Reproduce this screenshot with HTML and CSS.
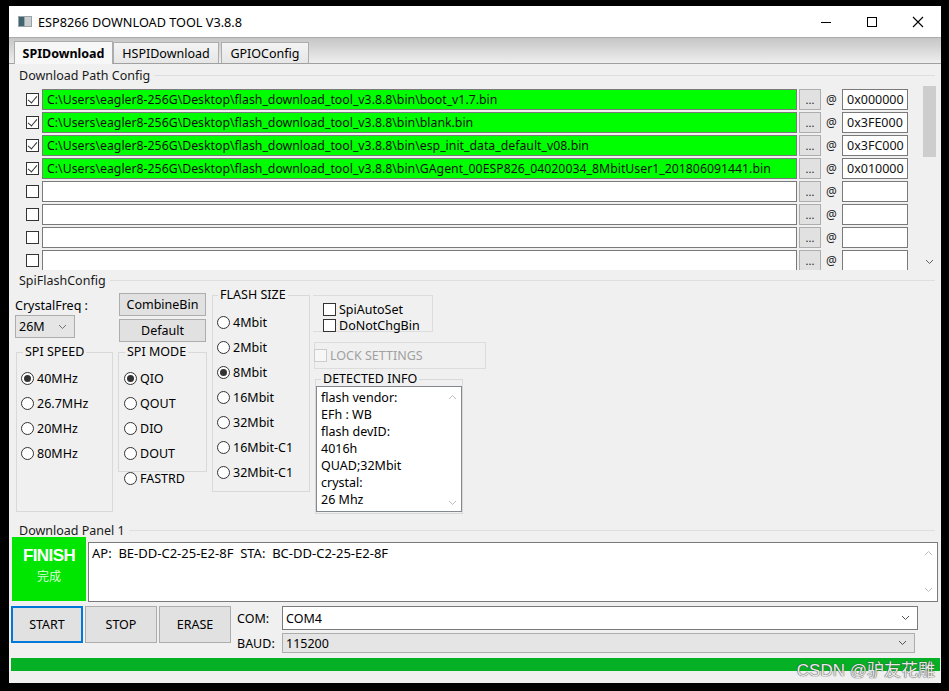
FILE: index.html
```html
<!DOCTYPE html>
<html>
<head>
<meta charset="utf-8">
<link rel="stylesheet" href="styles.css">
</head>
<body>
<div class="window">
  <div class="titlebar">
    <svg class="app-icon" viewBox="0 0 14 11" width="14" height="11"><rect x="0" y="0" width="14" height="11" fill="#9aa4a6"/><rect x="1" y="1" width="5" height="9" fill="#3f6570"/><rect x="7" y="1" width="6" height="9" fill="#c9cfd0"/></svg>
    <div class="title">ESP8266 DOWNLOAD TOOL V3.8.8</div>
    <div class="controls">
      <div class="ctl"><svg width="12" height="12" viewBox="0 0 12 12"><line x1="1" y1="6.5" x2="11" y2="6.5" stroke="#000" stroke-width="1"/></svg></div>
      <div class="ctl"><svg width="12" height="12" viewBox="0 0 12 12"><rect x="1.5" y="1.5" width="9" height="9" fill="none" stroke="#000" stroke-width="1"/></svg></div>
      <div class="ctl"><svg width="12" height="12" viewBox="0 0 12 12"><path d="M1 1 L11 11 M11 1 L1 11" stroke="#000" stroke-width="1.1"/></svg></div>
    </div>
  </div>
  <div class="tabstrip">
    <div class="tab active">SPIDownload</div>
    <div class="tab t2">HSPIDownload</div>
    <div class="tab t3">GPIOConfig</div>
  </div>

  <div class="sec-paths">
    <div class="sec-label">Download Path Config</div>
    <div class="paths-body">
      <div class="rows">
        <div class="row"><span class="cb on"></span><div class="path green">C:\Users\eagler8-256G\Desktop\flash_download_tool_v3.8.8\bin\boot_v1.7.bin</div><div class="dots">...</div><div class="at">@</div><div class="addr green">0x000000</div></div>
        <div class="row"><span class="cb on"></span><div class="path green">C:\Users\eagler8-256G\Desktop\flash_download_tool_v3.8.8\bin\blank.bin</div><div class="dots">...</div><div class="at">@</div><div class="addr green">0x3FE000</div></div>
        <div class="row"><span class="cb on"></span><div class="path green">C:\Users\eagler8-256G\Desktop\flash_download_tool_v3.8.8\bin\esp_init_data_default_v08.bin</div><div class="dots">...</div><div class="at">@</div><div class="addr green">0x3FC000</div></div>
        <div class="row"><span class="cb on"></span><div class="path green">C:\Users\eagler8-256G\Desktop\flash_download_tool_v3.8.8\bin\GAgent_00ESP826_04020034_8MbitUser1_201806091441.bin</div><div class="dots">...</div><div class="at">@</div><div class="addr green">0x010000</div></div>
        <div class="row"><span class="cb"></span><div class="path"></div><div class="dots">...</div><div class="at">@</div><div class="addr"></div></div>
        <div class="row"><span class="cb"></span><div class="path"></div><div class="dots">...</div><div class="at">@</div><div class="addr"></div></div>
        <div class="row"><span class="cb"></span><div class="path"></div><div class="dots">...</div><div class="at">@</div><div class="addr"></div></div>
        <div class="row"><span class="cb"></span><div class="path"></div><div class="dots">...</div><div class="at">@</div><div class="addr"></div></div>
      </div>
      <div class="vscroll">
        <div class="thumb"></div>
        <svg class="chev-down" width="9" height="6" viewBox="0 0 9 6"><path d="M1 1 L4.5 4.5 L8 1" fill="none" stroke="#606060" stroke-width="1"/></svg>
      </div>
    </div>
  </div>

  <div class="sec-spi">
    <div class="sec-label">SpiFlashConfig</div>
    <div class="spi-row">
      <div class="col-a">
        <div class="cf-label">CrystalFreq :</div>
        <div class="select gray small"><span>26M</span><svg width="9" height="6" viewBox="0 0 9 6"><path d="M1 1 L4.5 4.5 L8 1" fill="none" stroke="#707070" stroke-width="1"/></svg></div>
        <fieldset class="grp speed">
          <legend>SPI SPEED</legend>
          <div class="opt"><span class="radio on"></span>40MHz</div>
          <div class="opt"><span class="radio"></span>26.7MHz</div>
          <div class="opt"><span class="radio"></span>20MHz</div>
          <div class="opt"><span class="radio"></span>80MHz</div>
        </fieldset>
      </div>
      <div class="col-b">
        <div class="btn combine">CombineBin</div>
        <div class="btn deflt">Default</div>
        <fieldset class="grp mode">
          <legend>SPI MODE</legend>
          <div class="opt"><span class="radio on"></span>QIO</div>
          <div class="opt"><span class="radio"></span>QOUT</div>
          <div class="opt"><span class="radio"></span>DIO</div>
          <div class="opt"><span class="radio"></span>DOUT</div>
        </fieldset>
        <div class="opt fastrd"><span class="radio"></span>FASTRD</div>
      </div>
      <div class="col-c">
        <fieldset class="grp size">
          <legend>FLASH SIZE</legend>
          <div class="opt"><span class="radio"></span>4Mbit</div>
          <div class="opt"><span class="radio"></span>2Mbit</div>
          <div class="opt"><span class="radio on"></span>8Mbit</div>
          <div class="opt"><span class="radio"></span>16Mbit</div>
          <div class="opt"><span class="radio"></span>32Mbit</div>
          <div class="opt"><span class="radio"></span>16Mbit-C1</div>
          <div class="opt"><span class="radio"></span>32Mbit-C1</div>
        </fieldset>
      </div>
      <div class="col-d">
        <div class="chkbox">
          <div class="chk"><span class="cb"></span>SpiAutoSet</div>
          <div class="chk"><span class="cb"></span>DoNotChgBin</div>
        </div>
        <div class="lockbox"><span class="cb dis"></span>LOCK SETTINGS</div>
        <fieldset class="grp detect">
          <legend>DETECTED INFO</legend>
          <div class="infobox">
            <div class="info-text">flash vendor:<br>EFh : WB<br>flash devID:<br>4016h<br>QUAD;32Mbit<br>crystal:<br>26 Mhz</div>
            <div class="info-scroll">
              <svg width="9" height="6" viewBox="0 0 9 6"><path d="M1 5 L4.5 1.5 L8 5" fill="none" stroke="#bdbdbd" stroke-width="1"/></svg>
              <svg width="9" height="6" viewBox="0 0 9 6"><path d="M1 1 L4.5 4.5 L8 1" fill="none" stroke="#bdbdbd" stroke-width="1"/></svg>
            </div>
          </div>
        </fieldset>
      </div>
    </div>
  </div>

  <div class="sec-panel">
    <div class="sec-label">Download Panel 1</div>
    <div class="panel-row">
      <div class="finish"><div class="fin-en">FINISH</div><div class="fin-cn">完成</div></div>
      <div class="log">
        <div class="log-text">AP:  BE-DD-C2-25-E2-8F  STA:  BC-DD-C2-25-E2-8F</div>
        <div class="log-scroll">
          <svg width="9" height="6" viewBox="0 0 9 6"><path d="M1 5 L4.5 1.5 L8 5" fill="none" stroke="#bdbdbd" stroke-width="1"/></svg>
          <svg width="9" height="6" viewBox="0 0 9 6"><path d="M1 1 L4.5 4.5 L8 1" fill="none" stroke="#bdbdbd" stroke-width="1"/></svg>
        </div>
      </div>
    </div>
    <div class="ctrl-row">
      <div class="bigbtn focus">START</div>
      <div class="bigbtn">STOP</div>
      <div class="bigbtn">ERASE</div>
      <div class="ports">
        <div class="port-row"><div class="plabel">COM:</div><div class="select white com"><span>COM4</span><svg width="9" height="6" viewBox="0 0 9 6"><path d="M1 1 L4.5 4.5 L8 1" fill="none" stroke="#505050" stroke-width="1"/></svg></div></div>
        <div class="port-row baudrow"><div class="plabel">BAUD:</div><div class="select gray baud"><span>115200</span><svg width="9" height="6" viewBox="0 0 9 6"><path d="M1 1 L4.5 4.5 L8 1" fill="none" stroke="#505050" stroke-width="1"/></svg></div></div>
      </div>
    </div>
    <div class="progress"></div>
  </div>
  <div class="watermark">CSDN @驴友花雕</div>
</div>
</body>
</html>
```

FILE: styles.css
```css
* { box-sizing: border-box; }
html, body { margin: 0; padding: 0; }
body {
  background: #000;
  width: 949px;
  height: 691px;
  overflow: hidden;
  font-family: "Noto Sans", "Open Sans", "Noto Sans CJK SC", sans-serif;
  font-size: 12px;
  color: #000;
}
.window {
  width: 932px;
  height: 677px;
  margin: 6px 0 0 9px;
  background: #f0f0f0;
  display: flex;
  flex-direction: column;
  position: relative;
  overflow: hidden;
}
/* title bar */
.titlebar {
  height: 32px;
  flex: none;
  background: #fff;
  border-bottom: 1px solid #acacac;
  display: flex;
  align-items: center;
}
.app-icon { margin-left: 9px; flex: none; }
.title { margin-left: 6px; font-size: 12.7px; }
.controls { margin-left: auto; display: flex; height: 100%; }
.ctl { width: 46px; display: flex; align-items: center; justify-content: center; }

/* tabs */
.tabstrip {
  height: 26px;
  flex: none;
  display: flex;
  align-items: flex-end;
  padding-left: 5px;
  background: linear-gradient(#c6c6c6, #eeeeee);
  border-bottom: 1px solid #a0a0a0;
}
.tab {
  height: 21px;
  border: 1px solid #acacac;
  border-bottom: none;
  background: linear-gradient(#f4f4f4, #e6e6e6);
  font-size: 12.5px;
  display: flex;
  align-items: center;
  justify-content: center;
}
.tab.active {
  width: 99px;
  height: 23px;
  margin-bottom: -1px;
  background: #f7f7f7;
  font-weight: bold;
}
.t2 { width: 106px; }
.t3 { width: 88px; margin-left: 2px; }

/* section labels */
.sec-label {
  display: flex;
  align-items: center;
  padding-left: 10px;
  font-size: 12.5px;
  color: #1a1a1a;
}
.sec-label::after {
  content: "";
  flex: 1;
  height: 1px;
  background: #dedede;
  margin-left: 4px;
  margin-right: 6px;
}

/* paths */
.sec-paths { height: 206px; flex: none; display: flex; flex-direction: column; }
.sec-paths .sec-label { height: 22px; }
.paths-body { height: 184px; display: flex; }
.rows { flex: 1; overflow: hidden; padding-top: 3px; }
.row { height: 21px; margin-bottom: 2px; display: flex; align-items: center; }
.cb {
  width: 13px; height: 13px;
  border: 1px solid #333;
  background: #fff;
  flex: none;
  position: relative;
}
.cb.on::after {
  content: "";
  position: absolute;
  left: 3px; top: 0px;
  width: 4px; height: 8px;
  border-right: 1px solid #333;
  border-bottom: 1px solid #333;
  transform: rotate(40deg);
}
.cb.dis { border-color: #cccccc; background: #f7f7f7; }
.row .cb { margin-left: 17px; }
.path {
  margin-left: 3px;
  width: 755px;
  height: 21px;
  border: 1px solid #7a7a7a;
  background: #fff;
  padding-left: 4px;
  line-height: 19px;
  font-size: 12.3px;
  color: #111;
  white-space: nowrap;
  overflow: hidden;
}
.green { background: #00ff00; }
.dots {
  margin-left: 2px;
  width: 22px;
  height: 21px;
  background: #e1e1e1;
  border: 1px solid #adadad;
  text-align: center;
  font-size: 11px;
  line-height: 19px;
  color: #222;
}
.at { width: 21px; text-align: center; font-size: 12px; color: #222; }
.addr {
  width: 66px;
  height: 21px;
  border: 1px solid #7a7a7a;
  background: #fff;
  padding-left: 4px;
  line-height: 19px;
  font-size: 12.5px;
  color: #111;
}
.vscroll {
  width: 15px;
  margin-left: 14px;
  margin-right: 4px;
  background: #f0f0f0;
  display: flex;
  flex-direction: column;
  align-items: center;
}
.thumb { width: 13px; height: 71px; background: #cdcdcd; }
.chev-down { margin-top: auto; margin-bottom: 5px; }

/* spi config */
.sec-spi { height: 252px; flex: none; padding-top: 2px; }
.sec-spi .sec-label { height: 16px; }
.spi-row { display: flex; align-items: flex-start; }
.col-a { width: 104px; padding-left: 6px; flex: none; }
.col-b { width: 89px; margin-left: 5px; flex: none; }
.col-c { width: 99px; margin-left: 4px; flex: none; }
.col-d { width: 173px; margin-left: 3px; flex: none; }
.cf-label { margin-top: 9px; height: 18px; line-height: 18px; font-size: 12.5px; }
.select {
  height: 23px;
  display: flex;
  align-items: center;
  padding-left: 3px;
  padding-right: 7px;
  justify-content: space-between;
  font-size: 12.5px;
}
.select.gray { background: #e5e5e5; border: 1px solid #adadad; }
.select.white { background: #fff; border: 1px solid #7a7a7a; }
.select.small { width: 60px; }

fieldset.grp {
  margin: 0;
  padding: 0;
  border: 1px solid #d9d9d9;
  min-width: 0;
}
fieldset.grp legend {
  padding: 0 2px;
  margin-left: 6px;
  line-height: 14px;
  font-size: 12.5px;
}
fieldset.speed { margin: 7px 0 0 1px; height: 167px; padding: 7px 0 0 4px; }
fieldset.speed legend { margin-left: 2px; }
fieldset.mode { margin-top: 3px; height: 127px; padding: 7px 0 0 5px; }
fieldset.mode legend { margin-left: 1px; }
fieldset.size { margin-left: 1px; height: 204px; padding: 8px 0 0 4px; }
fieldset.size legend { margin-left: 1px; }
.opt { height: 25px; display: flex; align-items: center; font-size: 12.5px; }
.radio {
  width: 13px; height: 13px;
  border: 1px solid #333;
  border-radius: 50%;
  background: #fff;
  margin-right: 3px;
  flex: none;
  position: relative;
}
.radio.on::after {
  content: "";
  position: absolute;
  left: 2px; top: 2px;
  width: 7px; height: 7px;
  border-radius: 50%;
  background: #333;
}
.fastrd { margin-top: -6px; padding-left: 6px; }
.btn {
  height: 23px;
  width: 87px;
  margin-left: 1px;
  background: #e1e1e1;
  border: 1px solid #adadad;
  display: flex;
  align-items: center;
  justify-content: center;
  font-size: 12.5px;
}
.combine { margin-top: 5px; }
.deflt { margin-top: 3px; }

.chkbox {
  margin-top: 7px;
  width: 120px;
  height: 37px;
  border: 1px solid #dcdcdc;
  border-left: none;
  padding-top: 5px;
  padding-left: 10px;
}
.chk { height: 16px; display: flex; align-items: center; font-size: 12.5px; }
.chk .cb { margin-right: 3px; }
.lockbox {
  margin-top: 10px;
  margin-left: 1px;
  width: 172px;
  height: 27px;
  border: 1px solid #dcdcdc;
  display: flex;
  align-items: center;
  color: #a0a0a0;
  font-size: 12.5px;
}
.lockbox .cb { margin-right: 3px; margin-left: -1px; }
fieldset.detect { margin: 3px 0 0 2px; width: 148px; height: 142px; }
fieldset.detect legend { margin-left: 5px; }
.infobox {
  width: 146px;
  height: 126px;
  border: 1px solid #828790;
  background: #fff;
  display: flex;
}
.info-text { flex: 1; padding-left: 4px; padding-top: 2px; line-height: 17px; font-size: 12.5px; }
.info-scroll { width: 17px; display: flex; flex-direction: column; justify-content: space-between; align-items: center; padding: 7px 0 5px; }

/* panel */
.sec-panel { flex: 1; padding-top: 1px; display: flex; flex-direction: column; }
.sec-panel .sec-label { height: 14px; }
.panel-row { display: flex; align-items: flex-start; height: 65px; }
.finish {
  margin-left: 3px;
  width: 74px;
  height: 64px;
  background: #00e600;
  color: #fff;
  display: flex;
  flex-direction: column;
  align-items: center;
}
.fin-en { margin-top: 8px; font-size: 17px; letter-spacing: -0.6px; font-weight: bold; line-height: 22px; font-family: "Liberation Sans", sans-serif; }
.fin-cn { margin-top: 1px; font-size: 12px; line-height: 16px; color: #dfffdf; font-family: "Noto Sans CJK SC", sans-serif; }
.log {
  margin-left: 2px;
  margin-top: 5px;
  width: 850px;
  height: 60px;
  border: 1px solid #7a7a7a;
  background: #fff;
  display: flex;
}
.log-text { flex: 1; padding-left: 3px; padding-top: 1px; white-space: pre; font-size: 13px; line-height: 18px; }
.log-scroll { width: 17px; display: flex; flex-direction: column; justify-content: space-between; align-items: center; padding: 7px 0 8px; }
.ctrl-row { display: flex; margin-top: 4px; height: 37px; align-items: flex-start; }
.bigbtn {
  width: 72px;
  height: 37px;
  margin-left: 2px;
  background: #e1e1e1;
  border: 1px solid #adadad;
  display: flex;
  align-items: center;
  justify-content: center;
  font-size: 12.5px;
}
.bigbtn.focus { border: 2px solid #0078d7; }
.ports { margin-left: 6px; }
.port-row { display: flex; align-items: center; }
.plabel { width: 45px; font-size: 12.5px; }
.com { width: 636px; height: 24px; }
.baudrow { margin-top: 3px; }
.baud { width: 633px; height: 20px; }
.progress {
  margin-top: 15px;
  margin-left: 2px;
  width: 929px;
  height: 13px;
  background: #06b025;
}
.watermark {
  position: absolute;
  right: 6px;
  bottom: 2px;
  font-size: 17px;
  color: rgba(255,255,255,0.9);
  text-shadow: 0 0 1px #444, 0 0 1px #444;
  font-family: "Liberation Sans", "Noto Sans CJK SC", sans-serif;
}
```
